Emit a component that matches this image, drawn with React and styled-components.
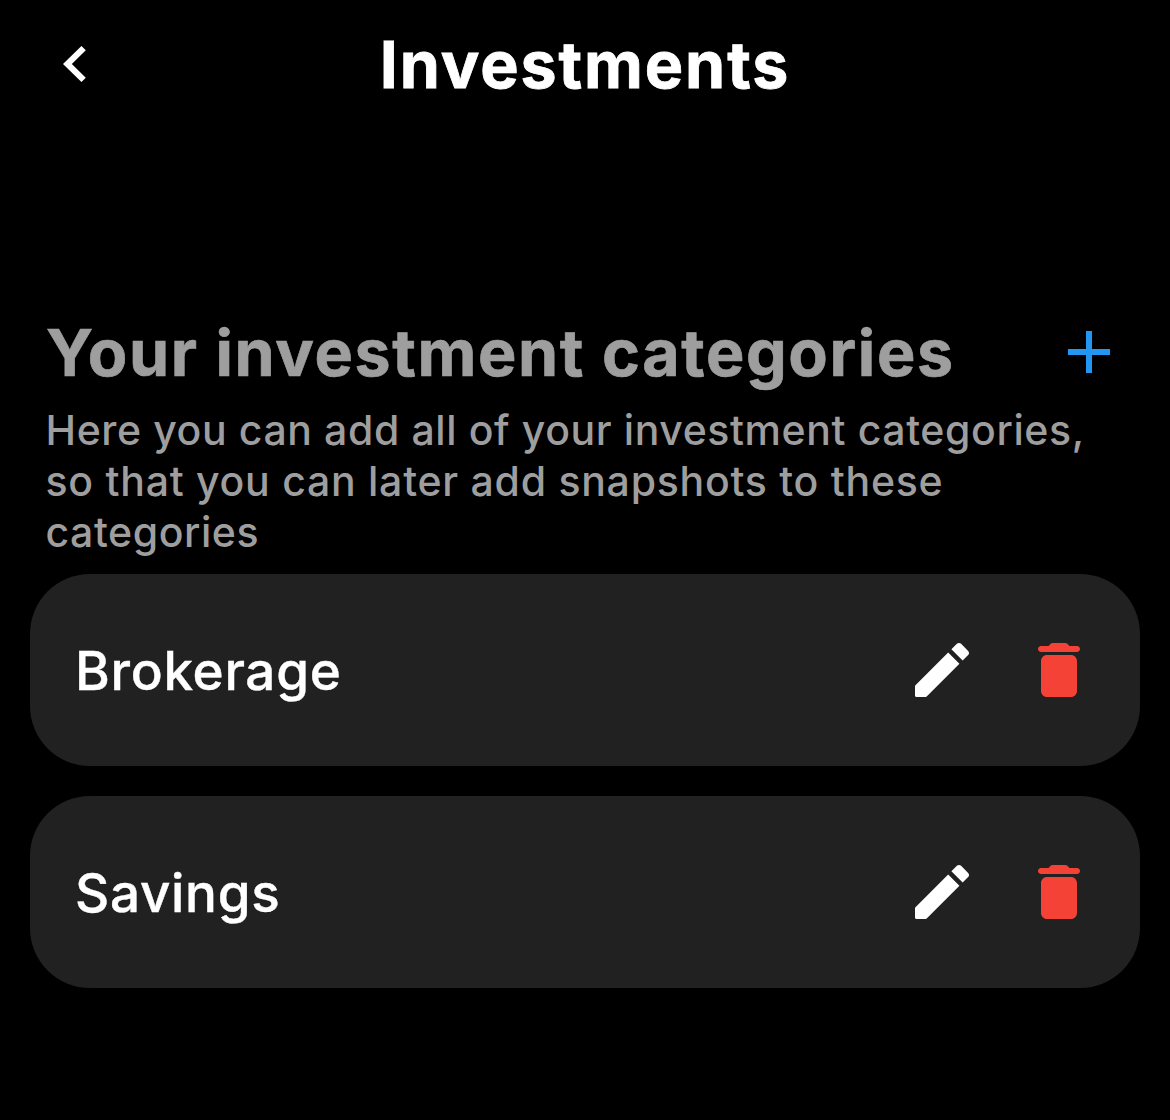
import React from "react";
import styled, { createGlobalStyle } from "styled-components";

const GlobalStyle = createGlobalStyle`
  *, *::before, *::after { box-sizing: border-box; }
  body { margin: 0; background: #000; font-family: Inter, "Liberation Sans", sans-serif; }
`;

const Screen = styled.main`
  display: flex;
  flex-direction: column;
  width: 1170px;
  height: 1120px;
  overflow: hidden;
  background: #000;
  color: #fff;
`;

const TopBar = styled.header`
  display: grid;
  grid-template-columns: 72px 1fr 72px;
  align-items: center;
  height: 128px;
  padding: 0 39px;
`;

const Title = styled.h1`
  margin: 0;
  padding-top: 2px;
  font-size: 64.5px;
  line-height: 78px;
  font-weight: 700;
  letter-spacing: 1.9px;
  -webkit-text-stroke: 0.8px currentColor;
  text-align: center;
  white-space: nowrap;
`;

const Content = styled.section`
  display: flex;
  flex-direction: column;
  padding: 185px 30px 0;
`;

const SectionHead = styled.div`
  display: flex;
  align-items: center;
  justify-content: space-between;
  height: 78px;
  padding: 0 15px 0 16px;
`;

const SectionTitle = styled.h2`
  margin: 0;
  padding-top: 2px;
  color: #9e9e9e;
  font-size: 64.5px;
  line-height: 78px;
  font-weight: 700;
  letter-spacing: 1.63px;
  -webkit-text-stroke: 0.7px currentColor;
  white-space: nowrap;
`;

const Description = styled.p`
  display: flex;
  flex-direction: column;
  margin: 14px 0 16px;
  padding: 0 15.5px;
  color: #9e9e9e;
  font-size: 41px;
  line-height: 51px;
  font-weight: 500;
  white-space: nowrap;
`;

const Line = styled.span`
  letter-spacing: ${({ $tracking }) => $tracking}px;
`;

const CategoryList = styled.ul`
  display: flex;
  flex-direction: column;
  gap: 30px;
  margin: 0;
  padding: 0;
  list-style: none;
`;

const CategoryCard = styled.li`
  display: flex;
  align-items: center;
  justify-content: space-between;
  height: 192px;
  padding: 0 45px;
  border-radius: 60px;
  background: #212121;
`;

const CategoryName = styled.span`
  padding-top: 1.5px;
  font-size: 53px;
  line-height: 64px;
  font-weight: 500;
  letter-spacing: 0.7px;
  -webkit-text-stroke: 0.4px currentColor;
`;

const Actions = styled.div`
  display: flex;
  gap: 45px;
`;

const IconButton = styled.button`
  display: flex;
  width: 72px;
  height: 72px;
  padding: 0;
  border: 0;
  background: none;
  color: ${({ $color }) => $color};
`;

const Glyph = styled.svg`
  width: 72px;
  height: 72px;
  fill: currentColor;
`;

const paths = {
  back: "M15.6 7.45 14.15 6 8 12l6.15 6 1.45-1.45L10.95 12z",
  add: "M19 13h-6v6h-2v-6H5v-2h6V5h2v6h6z",
  edit: "M3 17.46v3.04c0 .28.22.5.5.5h3.04c.13 0 .26-.05.35-.15L17.81 9.94l-3.75-3.75L3.15 17.1c-.1.1-.15.22-.15.36zM20.71 7.04c.39-.39.39-1.02 0-1.41l-2.34-2.34c-.39-.39-1.02-.39-1.41 0l-1.83 1.83 3.75 3.75 1.83-1.83z",
  remove: "M6 19c0 1.1.9 2 2 2h8c1.1 0 2-.9 2-2V9c0-1.1-.9-2-2-2H8c-1.1 0-2 .9-2 2v10zM18 4h-2.5l-.71-.71c-.18-.18-.44-.29-.7-.29H9.91c-.26 0-.52.11-.7.29L8.5 4H6c-.55 0-1 .45-1 1s.45 1 1 1h12c.55 0 1-.45 1-1s-.45-1-1-1z",
};

function Action({ icon, label, color = "#fff" }) {
  return (
    <IconButton $color={color} aria-label={label}>
      <Glyph viewBox="0 0 24 24" aria-hidden="true">
        <path d={paths[icon]} />
      </Glyph>
    </IconButton>
  );
}

const categories = ["Brokerage", "Savings"];

export default function App() {
  return (
    <>
      <GlobalStyle />
      <Screen>
        <TopBar>
          <Action icon="back" label="Back" />
          <Title>Investments</Title>
        </TopBar>
        <Content>
          <SectionHead>
            <SectionTitle>Your investment categories</SectionTitle>
            <Action icon="add" label="Add category" color="#2196f3" />
          </SectionHead>
          <Description>
            <Line $tracking={0.6}>Here you can add all of your investment categories,</Line>
            <Line $tracking={0.74}>so that you can later add snapshots to these</Line>
            <Line $tracking={0.56}>categories</Line>
          </Description>
          <CategoryList>
            {categories.map((name) => (
              <CategoryCard key={name}>
                <CategoryName>{name}</CategoryName>
                <Actions>
                  <Action icon="edit" label="Edit" />
                  <Action icon="remove" label="Delete" color="#f44336" />
                </Actions>
              </CategoryCard>
            ))}
          </CategoryList>
        </Content>
      </Screen>
    </>
  );
}
